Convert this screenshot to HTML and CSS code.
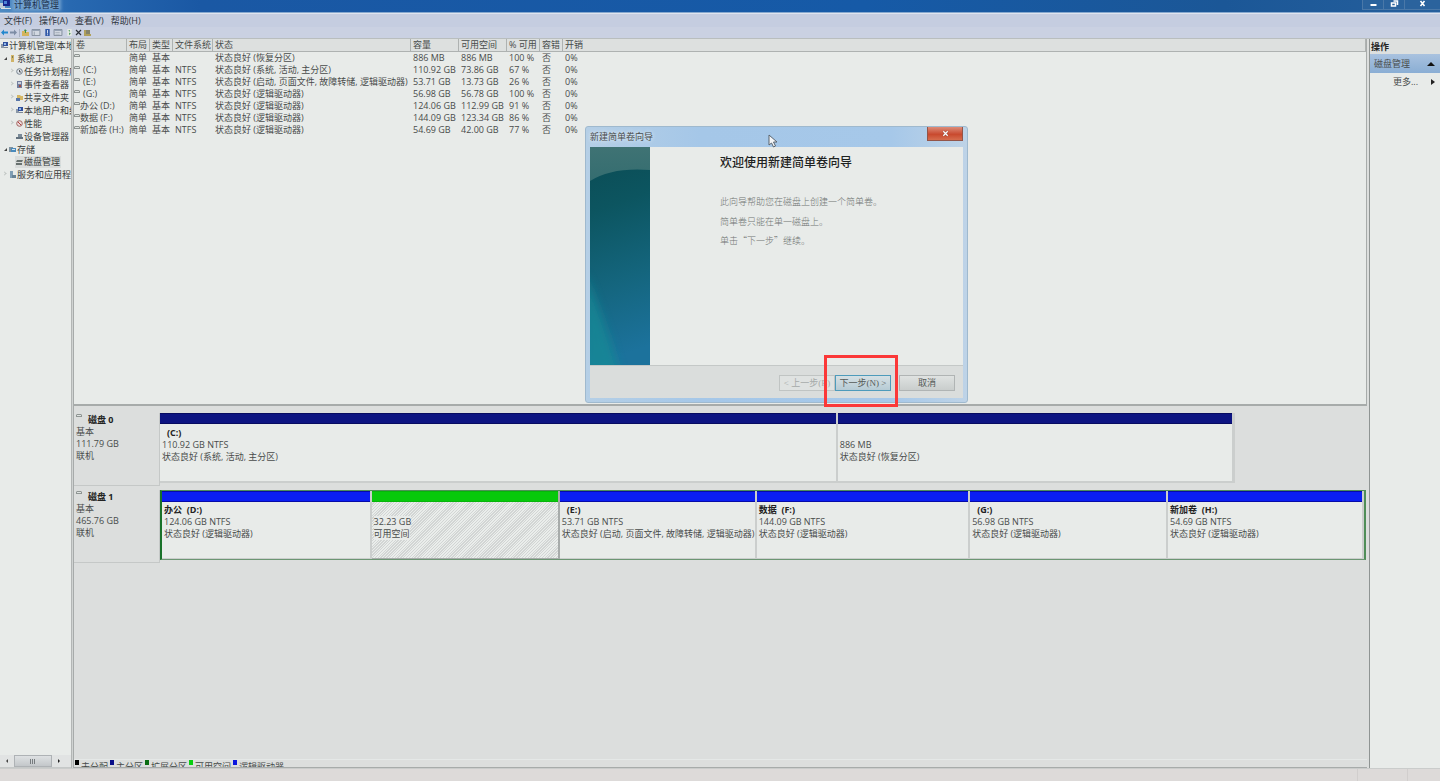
FILE: index.html
```html
<!DOCTYPE html>
<html lang="zh-CN">
<head>
<meta charset="utf-8">
<title>计算机管理</title>
<link rel="stylesheet" href="styles.css">
</head>
<body>
<svg class="defs" aria-hidden="true">
  <symbol id="vol" viewBox="0 0 6 4"><path d="M1 0h4l1 1v2H0V1z" fill="#8f9593"/><path d="M1 1h4v1H1z" fill="#dfe3e1"/></symbol>
  <symbol id="pc" viewBox="0 0 7 7"><path d="M0 2h3v4H0z" fill="#8b98a8"/><path d="M2 0h5v4H2z" fill="#2f4f9c"/><path d="M3 1h2v2H3z" fill="#8fb6e6"/><path d="M3 5h4v1H3z" fill="#7d8794"/></symbol>
</svg>
<header class="titlebar">
  <svg class="app-icon" viewBox="0 0 12 10"><path d="M0 3h5v5H0z" fill="#bccbd6"/><path d="M3 0h7v6H3z" fill="#14258b"/><path d="M4 1h3v3H4z" fill="#4b83d6"/><path d="M1 8h10v1H1z" fill="#dbe1e3"/></svg>
  <h1 class="app-title"><span>计算机管理</span></h1>
  <div class="win-buttons">
    <button class="win-btn" aria-label="最小化"><svg viewBox="0 0 8 8"><path d="M1 4h6v2H1z" fill="#fff"/></svg></button>
    <button class="win-btn" aria-label="还原"><svg viewBox="0 0 8 8"><path d="M3 1h4v4M1 3h4v3H1z" fill="none" stroke="#fff" stroke-width="1.5"/></svg></button>
    <button class="win-btn win-close" aria-label="关闭"><svg viewBox="0 0 8 8"><path d="M2 1l4 5M6 1L2 6" stroke="#fff" stroke-width="1.6"/></svg></button>
  </div>
</header>
<nav class="menubar">
  <button>文件(F)</button><button>操作(A)</button><button>查看(V)</button><button>帮助(H)</button>
</nav>
<div class="toolbar">
  <button aria-label="后退"><svg viewBox="0 0 7 7"><path d="M0 3.500l3-3v2h4v2H3v2z" fill="#2287cd"/></svg></button>
  <button aria-label="前进"><svg viewBox="0 0 7 7"><path d="M7 3.500l-3-3v2H0v2h4v2z" fill="#7d8da5"/></svg></button>
  <span class="sep"></span>
  <button aria-label="向上"><svg viewBox="0 0 7 7"><path d="M0 2h3l1 1h3v4H0z" fill="#d4b45c"/><path d="M3 0l2 2H4v2H3V2H2z" fill="#3c9348"/></svg></button>
  <button class="wide" aria-label="显示树"><svg viewBox="0 0 10 8"><path d="M.5.5h9v7h-9z" fill="#d2d8e1" stroke="#7c8796"/><path d="M1 1h8v1H1z" fill="#8290a4"/><path d="M3 3v4" stroke="#8e99a8"/></svg></button>
  <button aria-label="帮助"><svg viewBox="0 0 7 8"><path d="M1 0h5v8H1z" fill="#3158a8"/><path d="M3 1h1v4H3zM3 6h1v1H3z" fill="#e9eef6"/></svg></button>
  <button class="wide" aria-label="视图"><svg viewBox="0 0 10 8"><path d="M.5.5h9v7h-9z" fill="#d2d8e1" stroke="#7c8796"/><path d="M1 1h8v1H1z" fill="#8290a4"/><path d="M2 4h5M2 6h5" stroke="#a9b2be"/></svg></button>
  <button class="page" aria-label="刷新"><svg viewBox="0 0 7 8"><path d="M1 0h5v8H1z" fill="#e4e9e4"/><path d="M2 2l2-1v2zM5 5L3 7V4z" fill="#4b9b58"/></svg></button>
  <button aria-label="删除"><svg viewBox="0 0 7 7"><path d="M1 1l5 5M6 1L1 6" stroke="#2b2f38" stroke-width="1.200"/></svg></button>
  <button aria-label="属性"><svg viewBox="0 0 7 7"><path d="M0 1h2v4h5v2H0z" fill="#b0a05a"/><path d="M2 1h4v4H2z" fill="#85846a"/></svg></button>
</div>

<div class="workspace">
  <aside class="side">
    <ul class="tree">
      <li class="l0"><svg class="ti"><use href="#pc"/></svg><span>计算机管理(本地)</span></li>
      <li class="l1"><i class="open"></i><svg class="ti" viewBox="0 0 7 7"><path d="M2 0h3v7H2z" fill="#d0b468"/><path d="M3 1h1v2H3z" fill="#7d7a58"/></svg><span>系统工具</span></li>
      <li class="l2"><i class="shut"></i><svg class="ti" viewBox="0 0 7 7"><circle cx="3.500" cy="3.500" r="2.800" fill="#dfe5ea" stroke="#75818d"/><path d="M3.500 2v2H5" stroke="#555" fill="none"/></svg><span>任务计划程序</span></li>
      <li class="l2"><i class="shut"></i><svg class="ti" viewBox="0 0 7 7"><path d="M1 0h5v7H1z" fill="#737f9e"/><path d="M2 1h3v2H2z" fill="#c9d0dd"/><path d="M3 4h2v2H3z" fill="#a04c44"/></svg><span>事件查看器</span></li>
      <li class="l2"><i class="shut"></i><svg class="ti" viewBox="0 0 7 7"><path d="M1 1h3l1 1h2v4H1z" fill="#d5b764"/><path d="M0 4h4v3H0z" fill="#5977a8"/></svg><span>共享文件夹</span></li>
      <li class="l2"><i class="shut"></i><svg class="ti"><use href="#pc"/></svg><span>本地用户和组</span></li>
      <li class="l2"><i class="shut"></i><svg class="ti" viewBox="0 0 7 7"><circle cx="3.500" cy="3.500" r="2.800" fill="#eadcdc" stroke="#a36561"/><path d="M2 2l3 3" stroke="#b33d3d"/></svg><span>性能</span></li>
      <li class="l2"><i></i><svg class="ti" viewBox="0 0 7 7"><path d="M2 1h4v3H2z" fill="#7a8a98"/><path d="M0 4h7v2H0z" fill="#63717e"/></svg><span>设备管理器</span></li>
      <li class="l1"><i class="open"></i><svg class="ti" viewBox="0 0 7 7"><path d="M0 1h4v5H0z" fill="#7f929f"/><path d="M2 2h5v4H2z" fill="#4a8abb"/><path d="M3 3h3v1H3z" fill="#d4e4ee"/></svg><span>存储</span></li>
      <li class="l2"><i></i><span class="sel"><svg class="ti" viewBox="0 0 7 7"><path d="M1 1h6L6 3H0zM0 4h6v2H0z" fill="#68716f"/></svg>磁盘管理</span></li>
      <li class="l1"><i class="shut"></i><svg class="ti" viewBox="0 0 7 7"><path d="M1 0h3v7H1z" fill="#7f9eb5"/><path d="M3 4h4v3H3z" fill="#688395"/></svg><span>服务和应用程序</span></li>
    </ul>
    <div class="hscroll"><button aria-label="向左滚动"><i class="arr left"></i></button><span class="thumb"><svg viewBox="0 0 6 5"><path d="M.5 0v5M2.500 0v5M4.500 0v5" stroke="#777c7f"/></svg></span><button aria-label="向右滚动"><i class="arr right"></i></button></div>
  </aside>

  <main class="main">
    <section class="volumes">
      <table class="vol-table">
        <colgroup><col class="c-vol"><col class="c-s"><col class="c-s"><col class="c-fs"><col class="c-state"><col class="c-cap"><col class="c-cap"><col class="c-pct"><col class="c-s"><col></colgroup>
        <thead><tr><th>卷</th><th>布局</th><th>类型</th><th>文件系统</th><th>状态</th><th>容量</th><th>可用空间</th><th>% 可用</th><th>容错</th><th>开销</th></tr></thead>
        <tbody>
          <tr><td><svg class="vi"><use href="#vol"/></svg></td><td>简单</td><td>基本</td><td></td><td>状态良好 (恢复分区)</td><td>886 MB</td><td>886 MB</td><td>100 %</td><td>否</td><td>0%</td></tr>
          <tr><td><svg class="vi"><use href="#vol"/></svg><span class="nolabel">(C:)</span></td><td>简单</td><td>基本</td><td>NTFS</td><td>状态良好 (系统, 活动, 主分区)</td><td>110.92 GB</td><td>73.86 GB</td><td>67 %</td><td>否</td><td>0%</td></tr>
          <tr><td><svg class="vi"><use href="#vol"/></svg><span class="nolabel">(E:)</span></td><td>简单</td><td>基本</td><td>NTFS</td><td>状态良好 (启动, 页面文件, 故障转储, 逻辑驱动器)</td><td>53.71 GB</td><td>13.73 GB</td><td>26 %</td><td>否</td><td>0%</td></tr>
          <tr><td><svg class="vi"><use href="#vol"/></svg><span class="nolabel">(G:)</span></td><td>简单</td><td>基本</td><td>NTFS</td><td>状态良好 (逻辑驱动器)</td><td>56.98 GB</td><td>56.78 GB</td><td>100 %</td><td>否</td><td>0%</td></tr>
          <tr><td><svg class="vi"><use href="#vol"/></svg>办公 (D:)</td><td>简单</td><td>基本</td><td>NTFS</td><td>状态良好 (逻辑驱动器)</td><td>124.06 GB</td><td>112.99 GB</td><td>91 %</td><td>否</td><td>0%</td></tr>
          <tr><td><svg class="vi"><use href="#vol"/></svg>数据 (F:)</td><td>简单</td><td>基本</td><td>NTFS</td><td>状态良好 (逻辑驱动器)</td><td>144.09 GB</td><td>123.34 GB</td><td>86 %</td><td>否</td><td>0%</td></tr>
          <tr><td><svg class="vi"><use href="#vol"/></svg>新加卷 (H:)</td><td>简单</td><td>基本</td><td>NTFS</td><td>状态良好 (逻辑驱动器)</td><td>54.69 GB</td><td>42.00 GB</td><td>77 %</td><td>否</td><td>0%</td></tr>
        </tbody>
      </table>
    </section>
    <section class="disks">
      <article class="disk">
        <div class="disk-label"><h2><svg class="di"><use href="#vol"/></svg>磁盘 0</h2><p>基本</p><p>111.79 GB</p><p>联机</p></div>
        <div class="parts primary">
          <div class="part" style="flex-grow:680"><b class="indent">(C:)</b><span>110.92 GB NTFS</span><span>状态良好 (系统, 活动, 主分区)</span></div>
          <div class="part" style="flex-grow:395"><b></b><span>886 MB</span><span>状态良好 (恢复分区)</span></div>
        </div>
        <div class="spare"></div>
      </article>
      <article class="disk">
        <div class="disk-label"><h2><svg class="di"><use href="#vol"/></svg>磁盘 1</h2><p>基本</p><p>465.76 GB</p><p>联机</p></div>
        <div class="parts extended">
          <div class="part" style="flex-grow:210"><b>办公&nbsp; (D:)</b><span>124.06 GB NTFS</span><span>状态良好 (逻辑驱动器)</span></div>
          <div class="part free" style="flex-grow:188"><b></b><span>32.23 GB</span><span>可用空间</span></div>
          <div class="part" style="flex-grow:197"><b class="indent">(E:)</b><span>53.71 GB NTFS</span><span>状态良好 (启动, 页面文件, 故障转储, 逻辑驱动器)</span></div>
          <div class="part" style="flex-grow:214"><b>数据&nbsp; (F:)</b><span>144.09 GB NTFS</span><span>状态良好 (逻辑驱动器)</span></div>
          <div class="part" style="flex-grow:198"><b class="indent">(G:)</b><span>56.98 GB NTFS</span><span>状态良好 (逻辑驱动器)</span></div>
          <div class="part" style="flex-grow:196"><b>新加卷&nbsp; (H:)</b><span>54.69 GB NTFS</span><span>状态良好 (逻辑驱动器)</span></div>
        </div>
      </article>
      <ul class="legend">
        <li class="k-none">未分配</li><li class="k-primary">主分区</li><li class="k-ext">扩展分区</li><li class="k-free">可用空间</li><li class="k-logical">逻辑驱动器</li>
      </ul>
    </section>
  </main>

  <aside class="actions">
    <h2>操作</h2>
    <button class="group">磁盘管理<i class="arr up"></i></button>
    <button class="more">更多...<i class="arr right"></i></button>
  </aside>
</div>
<footer class="status"><span></span><span></span></footer>

<div class="wizard" role="dialog" aria-labelledby="wiz-title">
  <div class="wiz-bar"><span id="wiz-title">新建简单卷向导</span><button class="wiz-close" aria-label="关闭"><svg viewBox="0 0 8 8"><path d="M1.500 1.500l5 5M6.500 1.500l-5 5" stroke="#8d4438" stroke-width="2.600"/><path d="M1.500 1.500l5 5M6.500 1.500l-5 5" stroke="#fff" stroke-width="1.500"/></svg></button></div>
  <div class="wiz-body">
    <svg class="wiz-art" viewBox="0 0 60 218" preserveAspectRatio="none">
      <defs>
        <linearGradient id="sea" x1="0" y1="0" x2=".1" y2="1"><stop offset="0" stop-color="#0b4b53"/><stop offset=".3" stop-color="#0c5560"/><stop offset=".65" stop-color="#14657d"/><stop offset="1" stop-color="#1c729c"/></linearGradient>
        <linearGradient id="haze" x1="0" y1="0" x2="0" y2="1"><stop offset="0" stop-color="#3f7374"/><stop offset="1" stop-color="#356d70"/></linearGradient>
        <filter id="soft" x="-50%" y="-20%" width="200%" height="140%"><feGaussianBlur stdDeviation="5"/></filter>
      </defs>
      <path d="M0 0h60v218H0z" fill="url(#sea)"/>
      <path d="M0 0h60v23Q22 20 0 34z" fill="url(#haze)"/>
      <path d="M-6 125Q14 170 30 226H-6z" fill="#148b96" opacity=".75" filter="url(#soft)"/>
    </svg>
    <div class="wiz-text"><h2>欢迎使用新建简单卷向导</h2><p class="first">此向导帮助您在磁盘上创建一个简单卷。</p><p>简单卷只能在单一磁盘上。</p><p>单击“下一步”继续。</p></div>
  </div>
  <div class="wiz-foot"><button class="btn off" disabled>&lt; 上一步(B)</button><button class="btn next">下一步(N) &gt;</button><button class="btn cancel">取消</button></div>
  <div class="highlight"></div>
  <svg class="cursor" viewBox="0 0 10 14"><path d="M1 1v10l2.500-2 2 4 2-1-2-4H9z" fill="#f4f6f8" stroke="#59636d"/></svg>
</div>
</body>
</html>
```
FILE: styles.css
```css
* { box-sizing: border-box; }
body {
  margin: 0; height: 100vh; display: flex; flex-direction: column; overflow: hidden; position: relative;
  font: 9px/12px "Open Sans", "Noto Sans CJK SC", sans-serif; color: #484c4b; background: #e8ebe9;
}
button { font: inherit; color: inherit; background: none; border: 0; padding: 0; margin: 0; }
h1, h2, p, ul { margin: 0; padding: 0; list-style: none; font-size: inherit; }
svg { display: block; flex: none; }
.defs { position: absolute; width: 0; height: 0; }

.titlebar { display: flex; flex: none; height: 13px; background: linear-gradient(90deg, #4f8cc4 0, #2869b1 70px, #1a58a4 200px, #165aa7 60%, #1b5797 85%, #255f9c); border-bottom: 1px solid #87a9cf; }
.app-icon { width: 12px; height: 10px; }
.app-title { flex: 1; font-weight: 400; line-height: 9px; color: #1c304c; padding-left: 2px; }
.app-title span { display: inline-block; background: #6f9fcd; box-shadow: 0 0 3px 2px #6f9fcd; }
.win-buttons { display: flex; height: 10px; }
.win-btn { width: 21px; display: flex; justify-content: center; border: solid #4a78a8; border-width: 0 0 1px 1px; background: #2b639d; }
.win-btn svg { width: 9px; height: 8px; }
.win-close { width: 36px; }

.menubar { display: flex; flex: none; gap: 7px; height: 14px; padding: 0 4px; background: #c5cde0; border-top: 1px solid #dfe4ee; line-height: 11px; color: #30353d; }
.menubar button { height: 12px; }
.toolbar { display: flex; flex: none; align-items: center; gap: 2px; height: 11px; padding-left: 1px; background: #cad1e2; }
.toolbar svg { width: 7px; height: 7px; }
.toolbar .wide svg { width: 10px; }
.sep { width: 1px; height: 8px; background: #a8b1c2; }
.toolbar .wide + button { margin-left: 1px; }

.workspace { flex: 1; min-height: 0; display: grid; grid-template-columns: 72px 1fr 71px; border-top: 1px solid #b9bebe; }
.side { display: flex; flex-direction: column; min-width: 0; border-right: 1px solid #b3b6b5; }
.tree { flex: 1; overflow: hidden; white-space: nowrap; line-height: 13px; color: #383c3b; }
.tree li { display: flex; align-items: center; }
.tree .l1 { padding-left: 3px; }
.tree .l2 { padding-left: 10px; }
.ti { width: 7px; height: 7px; margin: 0 1px; }
.tree i { width: 5px; height: 5px; flex: none; display: flex; }
.open::before { content: ""; margin: 1px; border-left: 3px solid transparent; border-bottom: 3px solid #444; }
.shut::before { content: ""; width: 2px; height: 2px; border: solid #c0c5c3; border-width: 1px 1px 0 0; transform: rotate(45deg); }
.sel { display: flex; align-items: center; background: #d9dcdb; padding-right: 1px; line-height: 12px; }
.hscroll { display: flex; height: 13px; background: #e1e3e3; border-bottom: 1px solid #c5c8c8; }
.hscroll button { width: 14px; display: flex; align-items: center; justify-content: center; }
.thumb { width: 38px; display: flex; align-items: center; justify-content: center; border: 1px solid #aeb2b5; background: linear-gradient(#dee1e3, #c3c7ca); }
.thumb svg { width: 6px; height: 5px; }
.arr { border: 3px solid transparent; }
.arr.left { border-width: 2px 2px 2px 0; border-right-color: #444; }
.arr.right { border-width: 3px 0 3px 4px; border-left-color: #222; }
.hscroll .arr.right { border-width: 2px 0 2px 2px; }
.arr.up { border-width: 0 4px 4px; border-bottom-color: #111; }

.main { display: flex; flex-direction: column; min-width: 0; padding-right: 2px; background: #dcdedd; border-left: 1px solid #d0d3d2; }
.volumes { flex: 0 0 auto; min-height: 367px; background: #e8ebe9; border: solid #a7abaa; border-width: 0 1px 2px; }
.vol-table { width: 100%; table-layout: fixed; border-collapse: separate; border-spacing: 0; white-space: nowrap; }
.vol-table th { height: 13px; padding: 0 0 0 2px; font-weight: 400; text-align: left; line-height: 12px; background: #dde0df; border: solid #aeb2b1; border-width: 0 1px 1px 0; }
.vol-table td { padding: 0 0 0 2px; height: 12px; line-height: 12px; }
.vol-table td:first-child { display: flex; padding: 0; }
.c-vol { width: 53px; } .c-s { width: 23px; } .c-fs { width: 40px; } .c-state { width: 198px; } .c-cap { width: 48px; } .c-pct { width: 33px; }
.vi { width: 6px; height: 4px; margin-top: 2px; }
.nolabel { padding-left: 3px; }

.disks { flex: 1; min-height: 0; display: flex; flex-direction: column; padding-top: 3px; border: solid #a7abaa; border-width: 0 0 1px 1px; }
.disk { display: flex; height: 77px; padding: 4px 1px 0 0; }
.disk-label { width: 86px; flex: none; padding: 1px 2px; border: solid #c5c8c7; border-width: 0 1px 1px 0; }
.disk-label h2 { display: flex; color: #222; }
.di { width: 6px; height: 4px; margin-right: 6px; }
.parts { display: flex; flex: 1205; min-width: 0; height: 70px; }
.parts.primary { flex-grow: 1074; border-right: 1px solid #cbcecd; }
.spare { flex: 131; }
.part { flex: 1 1 0; min-width: 0; overflow: hidden; white-space: nowrap; background: #e8ebe9; border: solid #cbcecd; border-width: 0 2px 2px 0; padding: 0 2px; }
.part::before { content: ""; display: block; height: 9px; margin: 0 -3px 2px -2px; background: #0a1ef2; border: solid #060aa8; border-width: 1px 1px 1px 0; }
.primary .part::before { background: #0d1482; border-color: #070b61; margin-bottom: 3px; }
.part b, .part span { display: block; height: 12px; }
.part b { color: #222; }
.part .indent { padding-left: 5px; }
.extended { border: solid #4f8e58; border-width: 1px 2px; border-bottom-color: #6c9673; border-left-color: #19722a; }
.extended .part { border-bottom-width: 1px; }
.part.free { background: repeating-linear-gradient(135deg, #eaedeb 0 1px, #d2d5d4 1px 2px); border-color: #a7abaa; }
.part.free::before { background: #07c90b; border-color: #07b50b; }
.free span { width: max-content; background: #e8ebe9; }
.legend { display: flex; height: 8px; margin-top: auto; padding-left: 1px; overflow: hidden; border-top: 1px solid #e5e8e7; }
.legend li { display: flex; gap: 2px; margin-right: 2px; line-height: 13px; }
.legend li::before { content: ""; width: 4px; height: 5px; background: #000; }
.legend .k-primary::before { background: #090e88; }
.legend .k-ext::before { background: #096d12; }
.legend .k-free::before { background: #08cf10; }
.legend .k-logical::before { background: #0a16df; }

.actions { border-left: 1px solid #8f9493; }
.actions h2 { height: 15px; padding-left: 1px; line-height: 15px; background: #dde0df; color: #222; }
.actions button { display: flex; align-items: center; justify-content: space-between; width: 100%; height: 19px; padding: 0 5px 0 4px; }
.actions .group { background: linear-gradient(#a9c2df, #8aaed4); }
.actions .more { padding-left: 23px; height: 18px; }

.status { display: flex; flex: none; height: 13px; border-top: 1px solid #cacccb; background: #dddad9; justify-content: flex-end; }
.status span { width: 50px; border-left: 1px solid #d1cecd; }
.status span:last-child { width: 33px; }

.wizard { position: absolute; left: 585px; top: 126px; width: 383px; padding: 0 4px 4px; border: 1px solid #9fb9ce; border-radius: 3px; background: linear-gradient(90deg, #b5cfe6, #a5c7e8 30%, #a6c8e9 80%, #bed3e7); }
.wiz-bar { display: flex; justify-content: space-between; height: 20px; line-height: 19px; }
.wiz-bar span { text-shadow: 0 0 4px #fff; }
.wiz-close { width: 36px; height: 14px; display: flex; align-items: center; justify-content: center; background: linear-gradient(#dd8c78, #cb5138 50%, #c7452a 51%, #d66d4e); border: 1px solid #935549; border-top: 0; }
.wiz-close svg { width: 7px; height: 7px; }
.wiz-body { display: flex; height: 218px; background: #e8ebe9; }
.wiz-art { width: 60px; height: 218px; }
.wiz-text { padding: 6px 0 0 70px; color: #707573; font-family: "Noto Sans CJK SC", sans-serif; font-weight: 300; }
.wiz-text h2 { font-size: 12px; line-height: 18px; font-weight: 500; color: #1e2221; }
.wiz-text p { margin-top: 6px; line-height: 13px; }
.wiz-text .first { margin: 24px 0 7px; }
.wiz-foot { display: flex; justify-content: flex-end; align-items: flex-start; height: 33px; padding: 9px 8px 0 0; background: #dadddc; border-top: 1px solid #c4c8c7; font-family: "Liberation Serif", "Noto Sans CJK SC", sans-serif; }
.btn { height: 16px; width: 56px; line-height: 14px; white-space: nowrap; border: 1px solid #b0b4b4; background: linear-gradient(#dfe2e1, #c9cdcc); color: #555a59; }
.btn.off { color: #a6aaa9; background: #dfe2e1; border-color: #c0c4c3; }
.btn.next { border-color: #4e9bbb; background: linear-gradient(#d6e0e4, #b6cbd5); }
.btn.cancel { margin-left: 8px; }
.highlight { position: absolute; left: 238px; top: 228px; width: 74px; height: 52px; border: 3px solid #fb3838; }
.cursor { position: absolute; left: 182px; top: 7px; width: 10px; height: 14px; }
```
